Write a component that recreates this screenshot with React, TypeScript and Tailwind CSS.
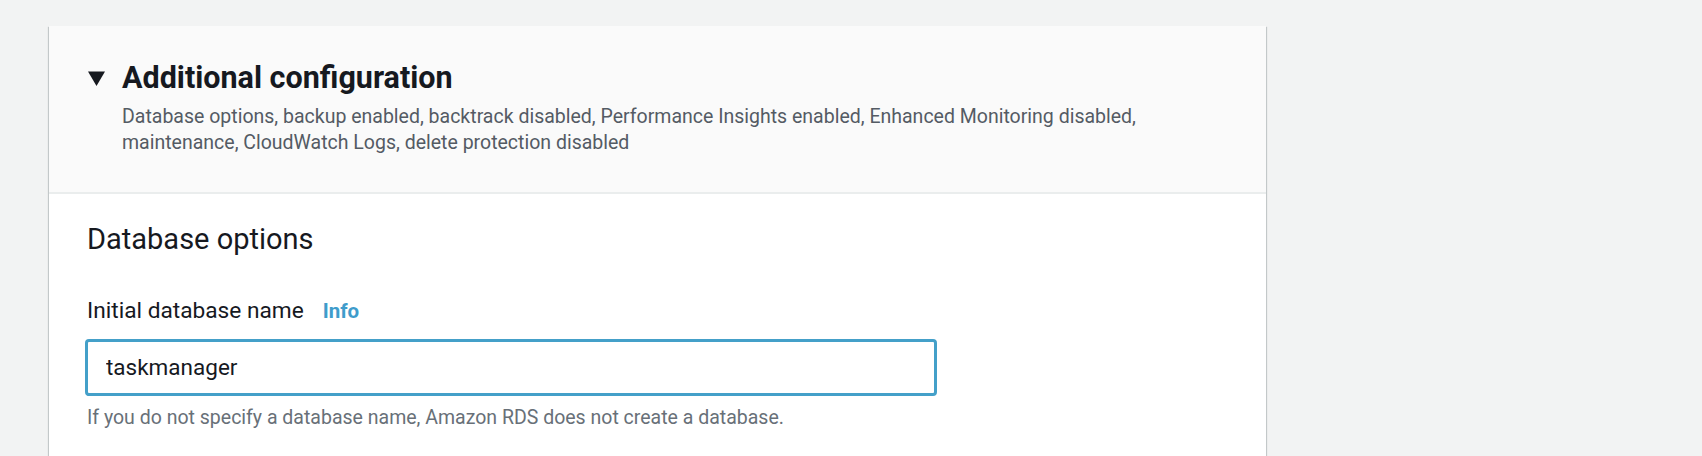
import { FC } from "react";
import classNames from "clsx";

const font = "font-['Roboto','Liberation_Sans',sans-serif]";

const CaretDown: FC<{ className?: string }> = ({ className }) => (
  <svg viewBox="0 0 16 14" className={className} aria-hidden>
    <path d="M0 0.5h16L8 14z" fill="#16191f" />
  </svg>
);

const ExpandableHeader: FC = () => (
  <div
    className={classNames(
      "bg-[#fafafa] border-b-2 border-[#eaeded]",
      "h-[168px] pl-[39px] pr-[39px] pt-[36px]",
    )}
  >
    <div className="flex items-center h-8">
      <CaretDown className="w-[17px] h-[15px] mr-[17px]" />
      <h2 className="text-[30.5px] leading-8 font-bold text-[#16191f]">
        Additional configuration
      </h2>
    </div>
    <p className="mt-[10px] ml-[34px] text-[19.5px] leading-[26px] text-[#545b64]">
      Database options, backup enabled, backtrack disabled, Performance
      Insights enabled, Enhanced Monitoring disabled, maintenance, CloudWatch
      Logs, delete protection disabled
    </p>
  </div>
);

const DatabaseOptions: FC = () => (
  <div className="px-[38px] pt-[27px] pb-10">
    <h3 className="text-[29px] leading-9 text-[#16191f]">Database options</h3>

    <div className="mt-[39px] flex items-baseline">
      <label
        htmlFor="db-name"
        className="text-[22.7px] leading-7 text-[#16191f]"
      >
        Initial database name
      </label>
      <a className="ml-[19px] text-[20.5px] font-bold text-[#3f9ccb]">Info</a>
    </div>

    <input
      id="db-name"
      defaultValue="taskmanager"
      className={classNames(
        "block mt-[12px] w-[852px] h-[57px] -ml-[2px]",
        "px-[18px] text-[22.5px] text-[#16191f]",
        "border-[3px] border-[#44a0c9] rounded-[4px] outline-none bg-white",
      )}
    />

    <p className="mt-[10px] text-[19.5px] leading-6 text-[#687078]">
      If you do not specify a database name, Amazon RDS does not create a
      database.
    </p>
  </div>
);

export default function App() {
  return (
    <div
      className={classNames(
        "min-h-screen bg-[#f2f3f3] pt-[26px] pl-[49px]",
        font,
      )}
    >
      <div
        className={classNames(
          "w-[1217px] bg-white",
          "shadow-[0_1px_1px_0_rgba(0,28,36,0.3),1px_1px_1px_0_rgba(0,28,36,0.15),-1px_1px_1px_0_rgba(0,28,36,0.15)]",
        )}
      >
        <ExpandableHeader />
        <DatabaseOptions />
      </div>
    </div>
  );
}
